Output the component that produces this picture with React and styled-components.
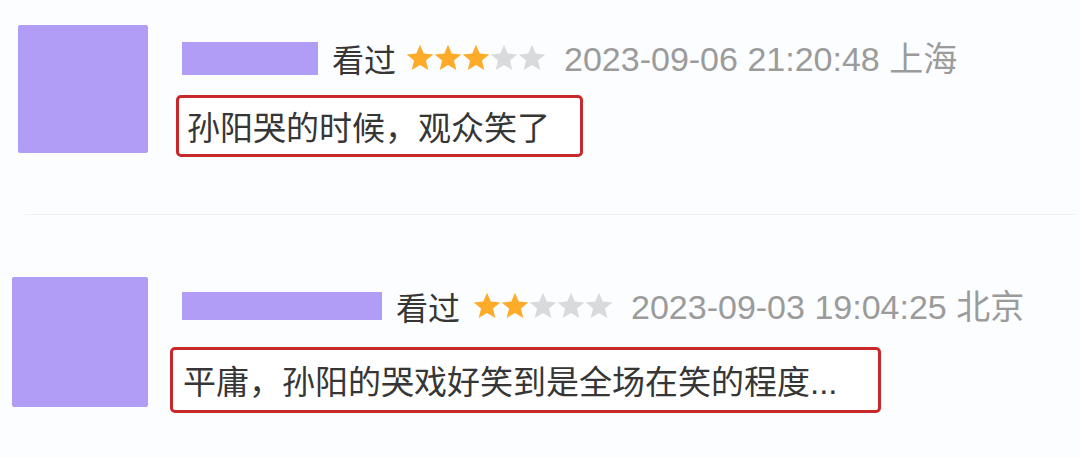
import React from 'react';
import styled, { createGlobalStyle } from 'styled-components';

const GlobalStyle = createGlobalStyle`
  html, body {
    margin: 0;
    padding: 0;
    background: #fbfdfe;
  }
  body {
    width: 1080px;
    height: 458px;
    overflow: hidden;
    font-family: 'Liberation Sans', 'Noto Sans CJK SC', sans-serif;
  }
`;

const Page = styled.div`
  width: 1080px;
  height: 458px;
  display: flex;
  flex-direction: column;
`;

const Row = styled.div`
  display: flex;
  align-items: flex-start;
  padding-top: ${(p) => p.$top}px;
  padding-left: ${(p) => p.$left}px;
  height: ${(p) => p.$height}px;
  box-sizing: border-box;
`;

const Avatar = styled.div`
  flex: none;
  width: ${(p) => p.$w}px;
  height: ${(p) => p.$h}px;
  background: #b19df5;
  border-radius: 2px;
`;

const Body = styled.div`
  display: flex;
  flex-direction: column;
  align-items: flex-start;
  margin-left: ${(p) => p.$gap}px;
  padding-top: ${(p) => p.$top}px;
`;

const Header = styled.div`
  display: flex;
  align-items: center;
  height: 40px;
  margin-left: ${(p) => p.$indent}px;
  margin-bottom: ${(p) => p.$below}px;
`;

const NameMask = styled.div`
  width: ${(p) => p.$w}px;
  height: ${(p) => p.$h}px;
  background: #b19df5;
`;

const Watched = styled.span`
  margin-left: 14px;
  font-family: 'Noto Sans CJK SC', sans-serif;
  font-size: 32px;
  line-height: 40px;
  color: #363636;
`;

const Stars = styled.div`
  display: flex;
  margin-left: ${(p) => p.$gap}px;
`;

const Star = styled.svg`
  width: 28px;
  height: 28px;
  display: block;
`;

const Stamp = styled.span`
  margin-left: 18px;
  font-size: 34px;
  line-height: 40px;
  color: #9b9b9b;
`;

const Place = styled.span`
  font-family: 'Noto Sans CJK SC', sans-serif;
`;

const Comment = styled.div`
  display: flex;
  align-items: center;
  height: ${(p) => p.$h}px;
  box-sizing: border-box;
  padding: 0 ${(p) => p.$right}px 0 ${(p) => p.$indent}px;
  border: 3px solid #c9282b;
  border-radius: 5px;
  background: #fff;
  font-size: 33px;
  color: #363636;
  white-space: nowrap;
`;

const Divider = styled.div`
  height: 1px;
  margin: 0 5px 0 25px;
  background: #edf1f4;
`;

function StarIcon({ on }) {
  return (
    <Star viewBox="0 0 24 24">
      <polygon
        points="12,0.6 15.2,8.2 23.4,8.9 17.1,14.2 19.1,22.2 12,17.9 4.9,22.2 6.9,14.2 0.6,8.9 8.8,8.2"
        fill={on ? '#ffab2a' : '#d8dadb'}
      />
    </Star>
  );
}

function Review({ row, avatar, body, name, score, time, place, text, box }) {
  return (
    <Row $top={row.top} $left={row.left} $height={row.height}>
      <Avatar $w={avatar.w} $h={avatar.h} />
      <Body $gap={body.gap} $top={body.top}>
        <Header $indent={body.indent} $below={body.below}>
          <NameMask $w={name.w} $h={name.h} />
          <Watched>看过</Watched>
          <Stars $gap={body.starGap}>
            {[1, 2, 3, 4, 5].map((n) => (
              <StarIcon key={n} on={n <= score} />
            ))}
          </Stars>
          <Stamp>
            {time} <Place>{place}</Place>
          </Stamp>
        </Header>
        <Comment $h={box.h} $indent={box.indent} $right={box.right}>
          {text}
        </Comment>
      </Body>
    </Row>
  );
}

export default function App() {
  return (
    <Page>
      <GlobalStyle />
      <Review
        row={{ top: 25, left: 18, height: 214 }}
        avatar={{ w: 130, h: 128 }}
        body={{ gap: 28, top: 13, indent: 6, below: 17, starGap: 10 }}
        name={{ w: 136, h: 33 }}
        score={3}
        time="2023-09-06 21:20:48"
        place="上海"
        text="孙阳哭的时候，观众笑了"
        box={{ h: 62, indent: 8, right: 30 }}
      />
      <Divider />
      <Review
        row={{ top: 62, left: 12, height: 243 }}
        avatar={{ w: 136, h: 130 }}
        body={{ gap: 22, top: 9, indent: 12, below: 21, starGap: 13 }}
        name={{ w: 200, h: 28 }}
        score={2}
        time="2023-09-03 19:04:25"
        place="北京"
        text="平庸，孙阳的哭戏好笑到是全场在笑的程度..."
        box={{ h: 66, indent: 10, right: 40 }}
      />
    </Page>
  );
}
